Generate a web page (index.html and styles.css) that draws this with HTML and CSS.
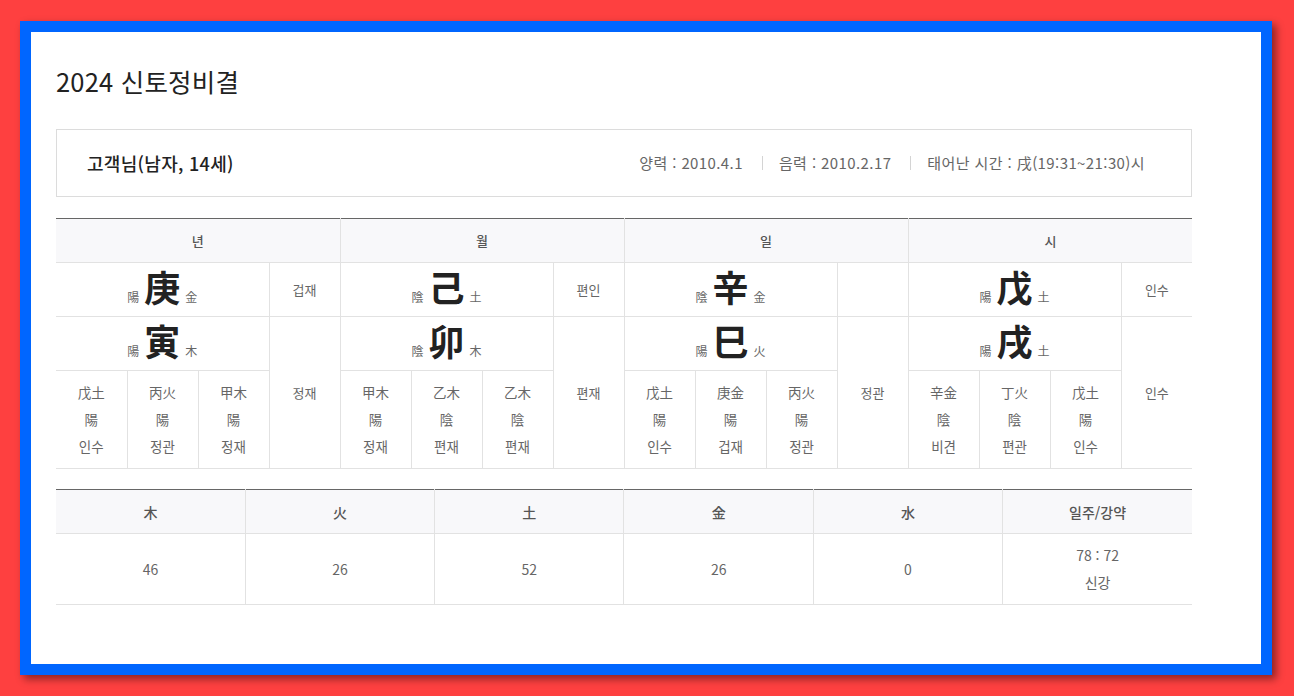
FILE: index.html
```html
<!DOCTYPE html>
<html lang="ko">
<head>
<meta charset="utf-8">
<title>2024 신토정비결</title>
<link rel="stylesheet" href="styles.css">
</head>
<body>
<div class="frame">
  <div class="panel">
    <h1 class="title">2024 신토정비결</h1>
    <div class="info">
      <div class="info-name">고객님(남자, 14세)</div>
      <ul class="info-list">
        <li>양력 : 2010.4.1</li>
        <li>음력 : 2010.2.17</li>
        <li>태어난 시간 : 戌(19:31~21:30)시</li>
      </ul>
    </div>

    <table class="saju">
      <colgroup>
        <col><col><col><col><col><col><col><col><col><col><col><col><col><col><col><col>
      </colgroup>
      <thead>
        <tr>
          <th colspan="4">년</th>
          <th colspan="4">월</th>
          <th colspan="4">일</th>
          <th colspan="4">시</th>
        </tr>
      </thead>
      <tbody>
        <tr class="big-row">
          <td class="stem" colspan="3"><span class="sm">陽</span><span class="big">庚</span><span class="sm">金</span></td>
          <td class="side">겁재</td>
          <td class="stem" colspan="3"><span class="sm">陰</span><span class="big">己</span><span class="sm">土</span></td>
          <td class="side">편인</td>
          <td class="stem" colspan="3"><span class="sm">陰</span><span class="big">辛</span><span class="sm">金</span></td>
          <td class="side"></td>
          <td class="stem" colspan="3"><span class="sm">陽</span><span class="big">戊</span><span class="sm">土</span></td>
          <td class="side">인수</td>
        </tr>
        <tr class="big-row">
          <td class="stem" colspan="3"><span class="sm">陽</span><span class="big">寅</span><span class="sm">木</span></td>
          <td class="side" rowspan="2">정재</td>
          <td class="stem" colspan="3"><span class="sm">陰</span><span class="big">卯</span><span class="sm">木</span></td>
          <td class="side" rowspan="2">편재</td>
          <td class="stem" colspan="3"><span class="sm">陽</span><span class="big">巳</span><span class="sm">火</span></td>
          <td class="side" rowspan="2">정관</td>
          <td class="stem" colspan="3"><span class="sm">陽</span><span class="big">戌</span><span class="sm">土</span></td>
          <td class="side" rowspan="2">인수</td>
        </tr>
        <tr class="sub-row">
          <td class="sub">戊土<br>陽<br>인수</td>
          <td class="sub">丙火<br>陽<br>정관</td>
          <td class="sub">甲木<br>陽<br>정재</td>
          <td class="sub">甲木<br>陽<br>정재</td>
          <td class="sub">乙木<br>陰<br>편재</td>
          <td class="sub">乙木<br>陰<br>편재</td>
          <td class="sub">戊土<br>陽<br>인수</td>
          <td class="sub">庚金<br>陽<br>겁재</td>
          <td class="sub">丙火<br>陽<br>정관</td>
          <td class="sub">辛金<br>陰<br>비견</td>
          <td class="sub">丁火<br>陰<br>편관</td>
          <td class="sub">戊土<br>陽<br>인수</td>
        </tr>
      </tbody>
    </table>

    <table class="elements">
      <thead>
        <tr>
          <th>木</th><th>火</th><th>土</th><th>金</th><th>水</th><th>일주/강약</th>
        </tr>
      </thead>
      <tbody>
        <tr>
          <td>46</td><td>26</td><td>52</td><td>26</td><td>0</td><td>78 : 72<br>신강</td>
        </tr>
      </tbody>
    </table>
  </div>
</div>
</body>
</html>
```

FILE: styles.css
```css
html, body {
  margin: 0;
  padding: 0;
}
body {
  background: #fe4040;
  width: 1294px;
  height: 696px;
  overflow: hidden;
  font-family: "Noto Sans CJK KR", "Noto Sans", sans-serif;
  color: #222;
}
.frame {
  margin: 21px 0 0 20px;
  width: 1252px;
  height: 654px;
  box-sizing: border-box;
  border: 11px solid #0066ff;
  background: #fff;
  box-shadow: 4px 4px 8px rgba(0, 0, 0, 0.45);
}
.panel {
  padding: 30px 0 0 25px;
  width: 1136px;
}
.title {
  margin: 0;
  font-size: 25.5px;
  font-weight: 400;
  line-height: 38px;
  color: #222;
  letter-spacing: 0.2px;
}
.info {
  margin-top: 29px;
  height: 66px;
  border: 1px solid #dcdcdc;
  display: flex;
  align-items: center;
  justify-content: space-between;
  padding: 0 46px 0 30px;
}
.info-name {
  font-size: 18px;
  font-weight: 500;
  color: #222;
  letter-spacing: 0.3px;
}
.info-list {
  list-style: none;
  margin: 0;
  padding: 0;
  display: flex;
  align-items: center;
  font-size: 15px;
  color: #666;
  letter-spacing: 0.4px;
}
.info-list li {
  padding: 0 0 0 16px;
  margin-left: 19px;
  border-left: 1px solid #d4d4d4;
  line-height: 14px;
}
.info-list li:first-child {
  border-left: none;
  margin-left: 0;
  padding-left: 0;
}
table {
  border-collapse: collapse;
  table-layout: fixed;
  width: 1136px;
}
.saju {
  margin-top: 21px;
  border-top: 1px solid #666;
}
.saju col {
  width: 71px;
}
th {
  background: #f8f8fa;
  font-size: 13px;
  font-weight: 500;
  color: #555;
  height: 43px;
  padding: 0;
  border: 1px solid #e2e2e2;
  border-top: none;
}
td {
  border: 1px solid #e2e2e2;
  padding: 0;
  text-align: center;
  font-size: 13px;
  color: #666;
}
th:first-child, td:first-child {
  border-left: none;
}
th:last-child, td:last-child {
  border-right: none;
}
.saju .big-row td {
  height: 53px;
}
.saju .big-row td.stem {
  height: 45px;
  padding-bottom: 8px;
}
.big {
  font-size: 36px;
  font-weight: 700;
  color: #222;
  margin: 0 5px;
  line-height: 44px;
}
.sm {
  font-size: 12px;
  color: #666;
}
.side {
  vertical-align: middle;
}
.saju .sub-row td.sub {
  height: 97px;
  line-height: 27px;
  font-size: 13.5px;
  border-left: 1px solid #e2e2e2;
}
.saju .sub-row td.sub:first-child {
  border-left: none;
}
.elements {
  margin-top: 20px;
  border-top: 1px solid #666;
}
.elements th {
  font-size: 14px;
}
.elements td {
  height: 70px;
  font-size: 14px;
  line-height: 27px;
}
```
